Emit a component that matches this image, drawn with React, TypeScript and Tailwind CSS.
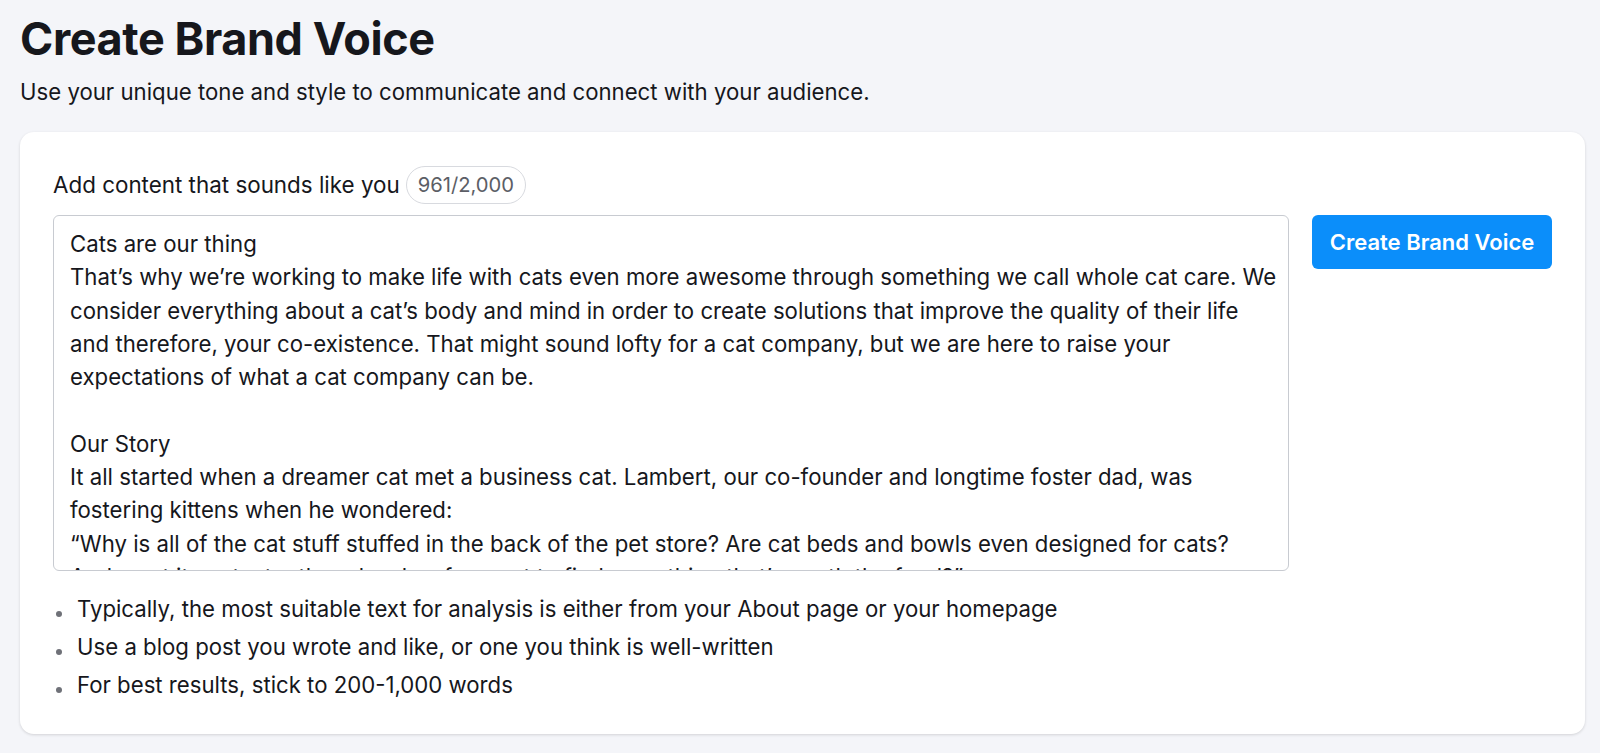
import React from "react";

const lines = [
  "Cats are our thing",
  "That’s why we’re working to make life with cats even more awesome through something we call whole cat care. We",
  "consider everything about a cat’s body and mind in order to create solutions that improve the quality of their life",
  "and therefore, your co-existence. That might sound lofty for a cat company, but we are here to raise your",
  "expectations of what a cat company can be.",
  "",
  "Our Story",
  "It all started when a dreamer cat met a business cat. Lambert, our co-founder and longtime foster dad, was",
  "fostering kittens when he wondered:",
  "“Why is all of the cat stuff stuffed in the back of the pet store? Are cat beds and bowls even designed for cats?",
  "And must it cost a tooth and a claw for a cat to find something that’s worth the food?”",
];

const tips = [
  "Typically, the most suitable text for analysis is either from your About page or your homepage",
  "Use a blog post you wrote and like, or one you think is well-written",
  "For best results, stick to 200-1,000 words",
];

export default function App() {
  return (
    <div
      className="min-h-[753px] bg-[#f4f5f9] pl-5 pr-[15px] pt-[12px] text-[#16171c]"
      style={{ fontFamily: "Inter, 'Noto Sans', sans-serif" }}
    >
      <h1 className="text-[45px] font-bold leading-[54px] tracking-[-0.4px]">Create Brand Voice</h1>
      <p className="mt-[11px] text-[22.2px] leading-[30px]">
        Use your unique tone and style to communicate and connect with your audience.
      </p>

      {/* main card */}
      <div className="mt-[25px] rounded-[14px] bg-white px-[33px] pb-[31px] pt-[34px] shadow-[0_1px_3px_rgba(0,0,0,0.14)]">
        <div className="flex items-center gap-[6px]">
          <span className="text-[22.4px] leading-[30px]">Add content that sounds like you</span>
          <span className="rounded-full border border-[#d8dadf] px-[11px] py-[6px] text-[20.2px] leading-[24px] text-[#5c5e66]">
            961/2,000
          </span>
        </div>

        <div className="mt-[11px] flex items-start gap-[23px]">
          <div className="h-[356px] w-[1236px] shrink-0 overflow-hidden rounded-[6px] border border-[#c8cbd1] px-[16px] pt-[11px]">
            {lines.map((l, i) => (
              <div key={i} className="h-[33.3px] whitespace-nowrap text-[22.2px] leading-[33.3px]">
                {l || "\u00a0"}
              </div>
            ))}
          </div>
          <button className="h-[54px] w-[240px] shrink-0 rounded-[6px] bg-[#0b8efa] text-[22px] font-semibold leading-[30px] text-white">
            Create Brand Voice
          </button>
        </div>

        <ul className="mt-[19px] flex flex-col">
          {tips.map((t) => (
            <li key={t} className="flex items-start text-[22.2px] leading-[37.8px]">
              <span className="ml-[3px] mr-[15px] mt-[21px] h-[6px] w-[6px] shrink-0 rounded-full bg-[#6f7178]" />
              {t}
            </li>
          ))}
        </ul>
      </div>
    </div>
  );
}
